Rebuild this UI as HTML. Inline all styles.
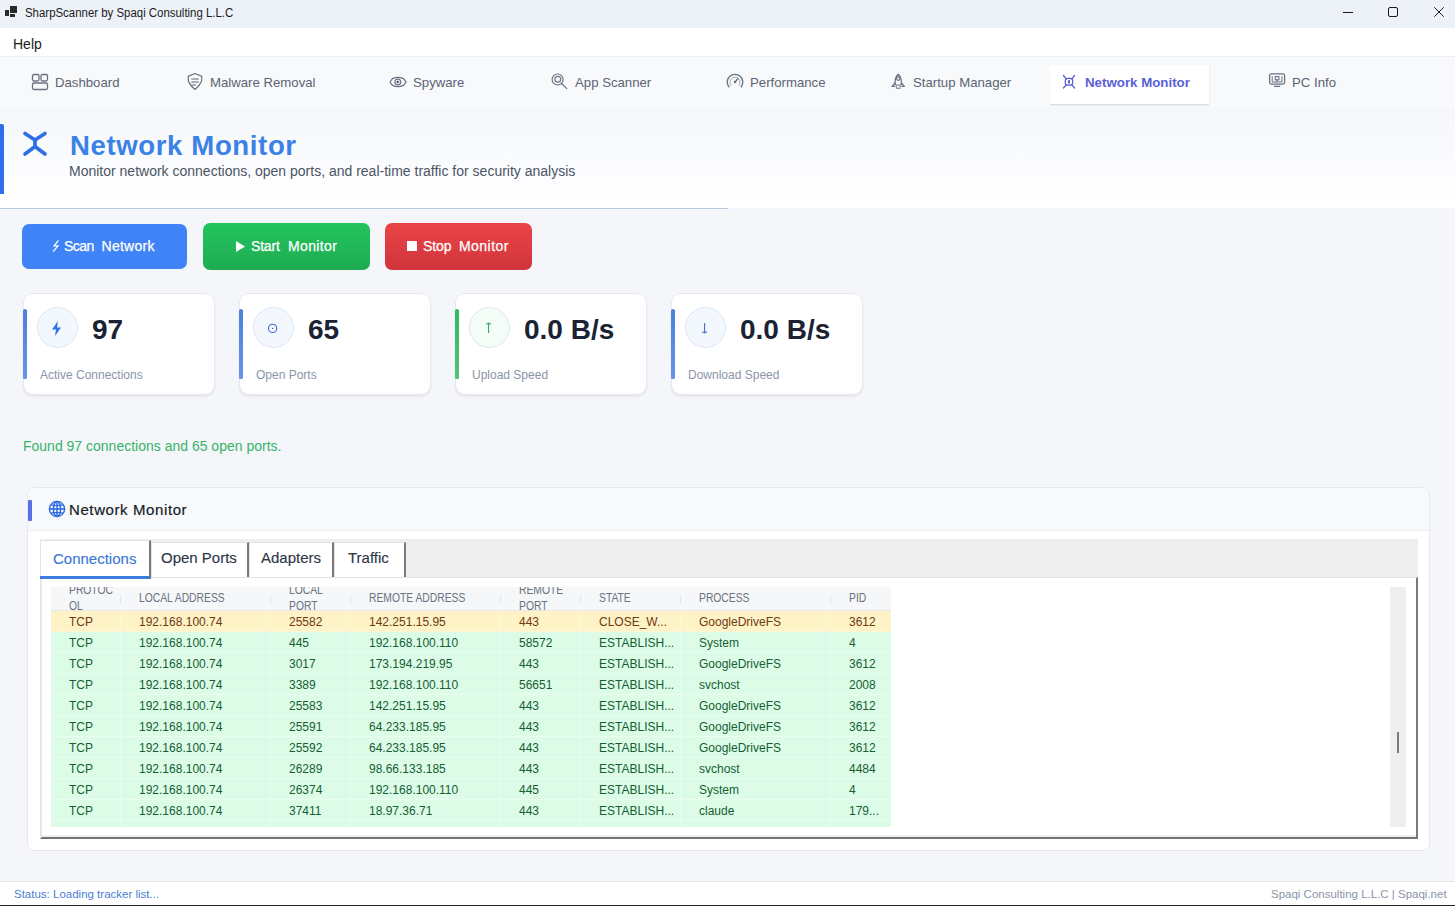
<!DOCTYPE html>
<html><head><meta charset="utf-8">
<style>
*{margin:0;padding:0;box-sizing:border-box}
html,body{width:1455px;height:906px;overflow:hidden}
body{position:relative;background:#f4f6fa;font-family:"Liberation Sans",sans-serif;color:#1f2937}
.a{position:absolute;white-space:nowrap}
#titlebar{left:0;top:0;width:1455px;height:28px;background:#edf1f8}
#menubar{left:0;top:28px;width:1455px;height:29px;background:#fff}
#navbar{left:0;top:56px;width:1455px;height:52px;background:#f8f9fb;border-top:1px solid #edeff3}
.nav{font-size:13.2px;color:#5b6474;line-height:16px;margin-top:1px}
#header{left:0;top:108px;width:1455px;height:100px;background:linear-gradient(180deg,#f5f7fa 0%,#fafbfd 50%,#ffffff 100%)}
.btn{border-radius:7px}
.bt{color:#fff;font-size:14px;line-height:16px;-webkit-text-stroke:0.25px #fff}
.card{width:192px;height:102px;background:#fff;border:1px solid #e6e9ef;border-radius:10px;box-shadow:0 2px 2px rgba(0,0,0,0.06)}
.bar{width:4px;border-radius:2px 2px 1px 1px}
.circ{width:41px;height:41px;border-radius:50%;background:#f3f7fe;border:1px solid #dfe7f4}
.val{font-size:28px;font-weight:bold;color:#1a2234;line-height:32px;margin-top:1px}
.lbl{font-size:12px;color:#8b95a7;line-height:14px;margin-top:1px}
.th{font-size:12px;color:#6b7280;line-height:15px;transform:scaleX(0.86);transform-origin:0 0}
.row{left:51px;width:840px;height:21px}
.cell{font-size:12px;line-height:21px;position:absolute;top:1px;white-space:nowrap}
</style></head><body>

<!-- title bar -->
<div class="a" id="titlebar"></div>
<div class="a" style="left:0;top:0;width:1455px;height:28px">
  <svg class="a" style="left:4px;top:5px" width="16" height="16" viewBox="0 0 16 16"><rect x="1" y="5" width="4" height="6" fill="#2b2b2b"/><rect x="6" y="1" width="7" height="7" fill="#2b2b2b"/><rect x="6" y="9" width="5" height="3" fill="#2b2b2b"/></svg>
  <div class="a" style="left:25px;top:4.6px;font-size:12px;line-height:16px;color:#1b1b1b;transform:scaleX(0.952);transform-origin:0 0">SharpScanner by Spaqi Consulting L.L.C</div>
  <div class="a" style="left:1343px;top:12px;width:10px;height:1px;background:#1b1b1b"></div>
  <div class="a" style="left:1388px;top:7px;width:10px;height:10px;border:1px solid #1b1b1b;border-radius:2px"></div>
  <svg class="a" style="left:1434px;top:7px" width="10" height="10" viewBox="0 0 10 10"><path d="M0.3 0.3L9.7 9.7M9.7 0.3L0.3 9.7" stroke="#1b1b1b" stroke-width="1"/></svg>
</div>

<!-- menu bar -->
<div class="a" id="menubar"></div>
<div class="a" style="left:13px;top:36px;font-size:14px;line-height:16px;color:#1b1b1b">Help</div>

<!-- nav bar -->
<div class="a" id="navbar"></div>
<div class="a" style="left:1050px;top:65px;width:159px;height:39px;background:#fff;box-shadow:0 1.5px 0 #dcdfe5, 1px 0 1px #eef0f3"></div>

<svg class="a" style="left:31px;top:73px" width="18" height="18" viewBox="0 0 18 18" fill="none" stroke="#6b7280" stroke-width="1.3"><rect x="1.5" y="1.5" width="6.5" height="6.5" rx="1.5"/><rect x="10" y="1.5" width="6.5" height="6.5" rx="1.5"/><rect x="1.5" y="10" width="15" height="6.5" rx="1.5"/></svg>
<div class="a nav" style="left:55px;top:74px">Dashboard</div>

<svg class="a" style="left:182px;top:70px" width="24" height="24" viewBox="0 0 24 24" fill="none" stroke="#6b7280" stroke-width="1.2" stroke-linejoin="round"><path d="M13 3.5L19.8 6.4L19.6 11Q18 15.5 13 19.5Q8 15.5 6.4 11L6.2 6.4Z"/><path d="M9.3 9H16.7M9.3 12H16.7M9.3 15H14" stroke="#8f96a3" stroke-width="1.5"/></svg>
<div class="a nav" style="left:210px;top:74px">Malware Removal</div>

<svg class="a" style="left:384px;top:70px" width="28" height="24" viewBox="0 0 28 24" fill="none" stroke="#6b7280" stroke-width="1.2"><path d="M6 12L8.5 8.6Q14 6 19.5 8.6L22 12L19.5 15.4Q14 18 8.5 15.4Z"/><circle cx="13.8" cy="12" r="2.9"/><circle cx="13.8" cy="12" r="1.2" fill="#4b5260" stroke="none"/></svg>
<div class="a nav" style="left:413px;top:74px">Spyware</div>

<svg class="a" style="left:546px;top:70px" width="24" height="24" viewBox="0 0 24 24" fill="none" stroke="#6b7280" stroke-width="1.2"><circle cx="11.6" cy="9.5" r="5.5"/><circle cx="11.8" cy="9.3" r="2.9"/><path d="M15.6 13.5L20.8 18.7" stroke-linecap="round"/></svg>
<div class="a nav" style="left:575px;top:74px">App Scanner</div>

<svg class="a" style="left:722px;top:70px" width="24" height="24" viewBox="0 0 24 24" fill="none" stroke="#6b7280" stroke-width="1.3"><path d="M7.2 17.3A7.8 7.8 0 1 1 18.8 17.3"/><path d="M9.3 15.5A5 5 0 1 1 16.7 15.5" stroke-width="0.9" stroke="#9aa1ad"/><path d="M13 12L16.3 8.2"/><circle cx="13" cy="12" r="1.3" fill="#6b7280" stroke="none"/></svg>
<div class="a nav" style="left:750px;top:74px">Performance</div>

<svg class="a" style="left:886px;top:70px" width="24" height="24" viewBox="0 0 24 24" fill="none" stroke="#6b7280" stroke-width="1.2" stroke-linejoin="round"><path d="M12.2 4.2Q15.3 7 15.3 11.5V15H9.1V11.5Q9.1 7 12.2 4.2Z"/><circle cx="12.2" cy="8.6" r="1.7"/><path d="M9.3 12.5L6 16.5H9.1M15.1 12.5L18.4 16.5H15.3"/><path d="M10.4 15.2V18.4H14V15.2" stroke="#8f96a3"/></svg>
<div class="a nav" style="left:913px;top:74px">Startup Manager</div>

<svg class="a" style="left:1061px;top:73px" width="16" height="17" viewBox="0 0 16 17" fill="none" stroke="#5757d4" stroke-width="1.2"><rect x="4.3" y="5.4" width="7.4" height="6.8" rx="2.4"/><ellipse cx="8" cy="8.8" rx="1.1" ry="2" fill="#5757d4" stroke="none"/><path d="M2.4 2.5L5.2 5.8M13.6 2.5L10.8 5.8M2.4 15L5.2 11.8M13.6 15L10.8 11.8" stroke-linecap="round"/></svg>
<div class="a nav" style="left:1085px;top:74px;font-weight:bold;color:#5b5fd6;font-size:13.3px">Network Monitor</div>

<svg class="a" style="left:1268px;top:72px" width="18" height="16" viewBox="0 0 18 16" fill="none" stroke="#6b7280" stroke-width="1.3"><rect x="1.6" y="1.9" width="15" height="10.2" rx="1.5"/><path d="M4.2 4.2V10H14V4.2" stroke-width="1"/><rect x="7.3" y="4.6" width="3.6" height="3.2" stroke-width="1.1"/><path d="M9.1 7.8V10M6 14.3H12.2" stroke-width="1.2"/></svg>
<div class="a nav" style="left:1292px;top:74px">PC Info</div>

<!-- header -->
<div class="a" id="header"></div>
<div class="a" style="left:0;top:124px;width:4px;height:70px;background:#2f6fec;border-radius:0 2px 0 0"></div>
<svg class="a" style="left:20px;top:128.7px" width="30" height="30" viewBox="0 0 30 30" fill="none" stroke="#2f6fe6" stroke-width="3.7" stroke-linecap="round" stroke-linejoin="round"><path d="M5 4.5L15 11L25 4.5M15 11V17.5M5 25L15 17.5L25 25"/></svg>
<div class="a" style="left:70px;top:129px;font-size:27.6px;line-height:34px;font-weight:bold;color:#3b82e6;letter-spacing:0.6px">Network Monitor</div>
<div class="a" style="left:69px;top:163px;font-size:14px;line-height:16px;color:#4b5563">Monitor network connections, open ports, and real-time traffic for security analysis</div>
<div class="a" style="left:0;top:208px;width:728px;height:1px;background:#b9cae3"></div>

<!-- buttons -->
<div class="a btn" style="left:22px;top:224px;width:165px;height:45px;background:#3f83f6"></div>
<svg class="a" style="left:52px;top:240px" width="8" height="12" viewBox="0 0 8 12" fill="none" stroke="#fff" stroke-width="1.2" stroke-linejoin="miter"><path d="M6.5 0.5L2 5.8H6L1.2 11.5"/></svg>
<div class="a bt" style="left:64px;top:238px;letter-spacing:-0.5px">Scan</div>
<div class="a bt" style="left:101.5px;top:238px;letter-spacing:0.27px">Network</div>
<div class="a btn" style="left:203px;top:223px;width:167px;height:47px;background:linear-gradient(#23c45e,#1eab52)"></div>
<svg class="a" style="left:236px;top:241px" width="9" height="11" viewBox="0 0 9 11"><path d="M0 0L9 5.5L0 11z" fill="#fff"/></svg>
<div class="a bt" style="left:251px;top:238px;letter-spacing:-0.2px">Start</div>
<div class="a bt" style="left:288px;top:238px;letter-spacing:0.37px">Monitor</div>
<div class="a btn" style="left:385px;top:223px;width:147px;height:47px;background:linear-gradient(#eb4447,#d0343c)"></div>
<div class="a" style="left:407px;top:241px;width:10px;height:10px;background:#fff"></div>
<div class="a bt" style="left:423px;top:238px;letter-spacing:-0.1px">Stop</div>
<div class="a bt" style="left:459px;top:238px;letter-spacing:0.45px">Monitor</div>

<!-- cards -->
<div class="a card" style="left:23px;top:293px"></div>
<div class="a bar" style="left:23px;top:309px;height:70px;background:linear-gradient(#4a80e0,#6495e8)"></div>
<div class="a circ" style="left:37px;top:307px"></div>
<svg class="a" style="left:51px;top:321px" width="12" height="15" viewBox="0 0 12 15"><path d="M7 0L1 8.5h4L4 15l6-8.5H6z" fill="#2f72e6"/></svg>
<div class="a val" style="left:92px;top:313px">97</div>
<div class="a lbl" style="left:40px;top:367px">Active Connections</div>

<div class="a card" style="left:239px;top:293px"></div>
<div class="a bar" style="left:239px;top:309px;height:70px;background:linear-gradient(#4a80e0,#6495e8)"></div>
<div class="a circ" style="left:253px;top:307px"></div>
<svg class="a" style="left:266px;top:322px" width="13" height="13" viewBox="0 0 13 13" fill="none" stroke="#3a6ed3" stroke-width="1.1"><circle cx="6.6" cy="6.4" r="4.1"/><circle cx="6.6" cy="6.4" r="0.6" fill="#3a4f80" stroke="none"/></svg>
<div class="a val" style="left:308px;top:313px">65</div>
<div class="a lbl" style="left:256px;top:367px">Open Ports</div>

<div class="a card" style="left:455px;top:293px"></div>
<div class="a bar" style="left:455px;top:309px;height:70px;background:linear-gradient(#2dba5e,#52c37c)"></div>
<div class="a circ" style="left:469px;top:307px;background:#f3fcf6;border-color:#dfeae3"></div>
<svg class="a" style="left:484px;top:322px" width="9" height="12" viewBox="0 0 9 12" fill="none" stroke="#38a56d" stroke-width="1.1"><path d="M4.6 1.3V11"/><path d="M2.3 2.2L4.6 1.2L6.9 2.2"/></svg>
<div class="a val" style="left:524px;top:313px">0.0 B/s</div>
<div class="a lbl" style="left:472px;top:367px">Upload Speed</div>

<div class="a card" style="left:671px;top:293px"></div>
<div class="a bar" style="left:671px;top:309px;height:70px;background:linear-gradient(#4a80e0,#6495e8)"></div>
<div class="a circ" style="left:685px;top:307px"></div>
<svg class="a" style="left:700px;top:322px" width="9" height="12" viewBox="0 0 9 12" fill="none" stroke="#4a70c8" stroke-width="1.1"><path d="M4.6 1V10.7"/><path d="M2.3 9.8L4.6 10.8L6.9 9.8"/></svg>
<div class="a val" style="left:740px;top:313px">0.0 B/s</div>
<div class="a lbl" style="left:688px;top:367px">Download Speed</div>

<div class="a" style="left:23px;top:438px;font-size:14px;line-height:16px;color:#38b368">Found 97 connections and 65 open ports.</div>

<!-- panel -->
<div class="a" style="left:27px;top:487px;width:1403px;height:364px;background:#fff;border:1px solid #e5e8ee;border-radius:7px;overflow:hidden">
  <div class="a" style="left:0;top:0;width:1403px;height:43px;background:#f8f9fb;border-bottom:1px solid #eceff3"></div>
</div>
<div class="a" style="left:28px;top:500px;width:4px;height:21px;background:#5a6fe6;border-radius:1px"></div>
<svg class="a" style="left:48px;top:500px" width="18" height="18" viewBox="0 0 18 18" fill="none" stroke="#2a67e0" stroke-width="1.4"><circle cx="9" cy="9" r="7.6"/><ellipse cx="9" cy="9" rx="3.6" ry="7.6"/><path d="M1.4 9H16.6M9 1.4V16.6M3 4.9Q9 6.4 15 4.9M3 13.1Q9 11.6 15 13.1"/></svg>
<div class="a" style="left:69px;top:501px;font-size:15px;line-height:17px;color:#151b26;letter-spacing:0.6px;-webkit-text-stroke:0.2px #151b26">Network Monitor</div>

<!-- tab control -->
<div class="a" style="left:40px;top:539px;width:1378px;height:38px;background:#efefef"></div>
<div class="a" style="left:40px;top:577px;width:1378px;height:262px;background:#fff;border-top:1px solid #e3e3e3;border-left:2px solid #e6e6e6;box-shadow:inset 0 -2px 0 #efefef;border-right:2px solid #7a7a7a;border-bottom:2px solid #747474"></div>

<div class="a" style="left:40px;top:540px;width:111px;height:39px;background:#fff;border-top:1px solid #e3e3e3;border-left:1px solid #e3e3e3;border-right:2px solid #7a7a7a"></div>
<div class="a" style="left:40px;top:576px;width:110px;height:3px;background:#3b7ddd"></div>
<div class="a" style="left:53px;top:550px;font-size:15px;line-height:17px;color:#3b78d6;-webkit-text-stroke:0.15px #3b78d6">Connections</div>

<div class="a" style="left:151px;top:542px;width:98px;height:35px;background:#fff;border-top:1px solid #e3e3e3;border-left:1px solid #e3e3e3;border-right:2px solid #7a7a7a"></div>
<div class="a" style="left:161px;top:549px;font-size:15px;line-height:17px;color:#2d3748;-webkit-text-stroke:0.15px #2d3748">Open Ports</div>
<div class="a" style="left:249px;top:542px;width:85px;height:35px;background:#fff;border-top:1px solid #e3e3e3;border-left:1px solid #e3e3e3;border-right:2px solid #7a7a7a"></div>
<div class="a" style="left:261px;top:549px;font-size:15px;line-height:17px;color:#2d3748;-webkit-text-stroke:0.15px #2d3748">Adapters</div>
<div class="a" style="left:334px;top:542px;width:72px;height:35px;background:#fff;border-top:1px solid #e3e3e3;border-left:1px solid #e3e3e3;border-right:2px solid #7a7a7a"></div>
<div class="a" style="left:348px;top:549px;font-size:15px;line-height:17px;color:#2d3748;-webkit-text-stroke:0.15px #2d3748">Traffic</div>

<!-- table -->
<div class="a" style="left:51px;top:587px;width:1339px;height:240px;overflow:hidden">
<div class="a" style="left:0;top:0;width:840px;height:24px;background:#f6f7f9;border-bottom:1px solid #e6e8ec;overflow:hidden">
<div class="a th" style="left:18px;top:-5px;line-height:16px">PROTOC<br>OL</div>
<div class="a th" style="left:88px;top:4px">LOCAL ADDRESS</div>
<div class="a th" style="left:238px;top:-5px;line-height:16px">LOCAL<br>PORT</div>
<div class="a th" style="left:318px;top:4px">REMOTE ADDRESS</div>
<div class="a th" style="left:468px;top:-5px;line-height:16px">REMOTE<br>PORT</div>
<div class="a th" style="left:548px;top:4px">STATE</div>
<div class="a th" style="left:648px;top:4px">PROCESS</div>
<div class="a th" style="left:798px;top:4px">PID</div>
<div class="a" style="left:69px;top:8px;width:1px;height:9px;background:#e3e6ea"></div>
<div class="a" style="left:219px;top:8px;width:1px;height:9px;background:#e3e6ea"></div>
<div class="a" style="left:299px;top:8px;width:1px;height:9px;background:#e3e6ea"></div>
<div class="a" style="left:449px;top:8px;width:1px;height:9px;background:#e3e6ea"></div>
<div class="a" style="left:529px;top:8px;width:1px;height:9px;background:#e3e6ea"></div>
<div class="a" style="left:629px;top:8px;width:1px;height:9px;background:#e3e6ea"></div>
<div class="a" style="left:779px;top:8px;width:1px;height:9px;background:#e3e6ea"></div>
</div>
<div class="a" style="left:0;top:23.5px;width:840px;height:21px;background:#fef3c7;border-bottom:1px solid #fef6d6">
<div class="cell" style="left:18px;color:#70380f">TCP</div>
<div class="cell" style="left:88px;color:#70380f">192.168.100.74</div>
<div class="cell" style="left:238px;color:#70380f">25582</div>
<div class="cell" style="left:318px;color:#70380f">142.251.15.95</div>
<div class="cell" style="left:468px;color:#70380f">443</div>
<div class="cell" style="left:548px;color:#70380f">CLOSE_W...</div>
<div class="cell" style="left:648px;color:#70380f">GoogleDriveFS</div>
<div class="cell" style="left:798px;color:#70380f">3612</div>
<div class="a" style="left:69px;top:0;width:1px;height:21px;background:#fef6d6"></div>
<div class="a" style="left:219px;top:0;width:1px;height:21px;background:#fef6d6"></div>
<div class="a" style="left:299px;top:0;width:1px;height:21px;background:#fef6d6"></div>
<div class="a" style="left:449px;top:0;width:1px;height:21px;background:#fef6d6"></div>
<div class="a" style="left:529px;top:0;width:1px;height:21px;background:#fef6d6"></div>
<div class="a" style="left:629px;top:0;width:1px;height:21px;background:#fef6d6"></div>
<div class="a" style="left:779px;top:0;width:1px;height:21px;background:#fef6d6"></div>
</div>
<div class="a" style="left:0;top:44.5px;width:840px;height:21px;background:#dcfce7;border-bottom:1px solid #e9fdf0">
<div class="cell" style="left:18px;color:#155e33">TCP</div>
<div class="cell" style="left:88px;color:#155e33">192.168.100.74</div>
<div class="cell" style="left:238px;color:#155e33">445</div>
<div class="cell" style="left:318px;color:#155e33">192.168.100.110</div>
<div class="cell" style="left:468px;color:#155e33">58572</div>
<div class="cell" style="left:548px;color:#155e33">ESTABLISH...</div>
<div class="cell" style="left:648px;color:#155e33">System</div>
<div class="cell" style="left:798px;color:#155e33">4</div>
<div class="a" style="left:69px;top:0;width:1px;height:21px;background:#e9fdf0"></div>
<div class="a" style="left:219px;top:0;width:1px;height:21px;background:#e9fdf0"></div>
<div class="a" style="left:299px;top:0;width:1px;height:21px;background:#e9fdf0"></div>
<div class="a" style="left:449px;top:0;width:1px;height:21px;background:#e9fdf0"></div>
<div class="a" style="left:529px;top:0;width:1px;height:21px;background:#e9fdf0"></div>
<div class="a" style="left:629px;top:0;width:1px;height:21px;background:#e9fdf0"></div>
<div class="a" style="left:779px;top:0;width:1px;height:21px;background:#e9fdf0"></div>
</div>
<div class="a" style="left:0;top:65.5px;width:840px;height:21px;background:#dcfce7;border-bottom:1px solid #e9fdf0">
<div class="cell" style="left:18px;color:#155e33">TCP</div>
<div class="cell" style="left:88px;color:#155e33">192.168.100.74</div>
<div class="cell" style="left:238px;color:#155e33">3017</div>
<div class="cell" style="left:318px;color:#155e33">173.194.219.95</div>
<div class="cell" style="left:468px;color:#155e33">443</div>
<div class="cell" style="left:548px;color:#155e33">ESTABLISH...</div>
<div class="cell" style="left:648px;color:#155e33">GoogleDriveFS</div>
<div class="cell" style="left:798px;color:#155e33">3612</div>
<div class="a" style="left:69px;top:0;width:1px;height:21px;background:#e9fdf0"></div>
<div class="a" style="left:219px;top:0;width:1px;height:21px;background:#e9fdf0"></div>
<div class="a" style="left:299px;top:0;width:1px;height:21px;background:#e9fdf0"></div>
<div class="a" style="left:449px;top:0;width:1px;height:21px;background:#e9fdf0"></div>
<div class="a" style="left:529px;top:0;width:1px;height:21px;background:#e9fdf0"></div>
<div class="a" style="left:629px;top:0;width:1px;height:21px;background:#e9fdf0"></div>
<div class="a" style="left:779px;top:0;width:1px;height:21px;background:#e9fdf0"></div>
</div>
<div class="a" style="left:0;top:86.5px;width:840px;height:21px;background:#dcfce7;border-bottom:1px solid #e9fdf0">
<div class="cell" style="left:18px;color:#155e33">TCP</div>
<div class="cell" style="left:88px;color:#155e33">192.168.100.74</div>
<div class="cell" style="left:238px;color:#155e33">3389</div>
<div class="cell" style="left:318px;color:#155e33">192.168.100.110</div>
<div class="cell" style="left:468px;color:#155e33">56651</div>
<div class="cell" style="left:548px;color:#155e33">ESTABLISH...</div>
<div class="cell" style="left:648px;color:#155e33">svchost</div>
<div class="cell" style="left:798px;color:#155e33">2008</div>
<div class="a" style="left:69px;top:0;width:1px;height:21px;background:#e9fdf0"></div>
<div class="a" style="left:219px;top:0;width:1px;height:21px;background:#e9fdf0"></div>
<div class="a" style="left:299px;top:0;width:1px;height:21px;background:#e9fdf0"></div>
<div class="a" style="left:449px;top:0;width:1px;height:21px;background:#e9fdf0"></div>
<div class="a" style="left:529px;top:0;width:1px;height:21px;background:#e9fdf0"></div>
<div class="a" style="left:629px;top:0;width:1px;height:21px;background:#e9fdf0"></div>
<div class="a" style="left:779px;top:0;width:1px;height:21px;background:#e9fdf0"></div>
</div>
<div class="a" style="left:0;top:107.5px;width:840px;height:21px;background:#dcfce7;border-bottom:1px solid #e9fdf0">
<div class="cell" style="left:18px;color:#155e33">TCP</div>
<div class="cell" style="left:88px;color:#155e33">192.168.100.74</div>
<div class="cell" style="left:238px;color:#155e33">25583</div>
<div class="cell" style="left:318px;color:#155e33">142.251.15.95</div>
<div class="cell" style="left:468px;color:#155e33">443</div>
<div class="cell" style="left:548px;color:#155e33">ESTABLISH...</div>
<div class="cell" style="left:648px;color:#155e33">GoogleDriveFS</div>
<div class="cell" style="left:798px;color:#155e33">3612</div>
<div class="a" style="left:69px;top:0;width:1px;height:21px;background:#e9fdf0"></div>
<div class="a" style="left:219px;top:0;width:1px;height:21px;background:#e9fdf0"></div>
<div class="a" style="left:299px;top:0;width:1px;height:21px;background:#e9fdf0"></div>
<div class="a" style="left:449px;top:0;width:1px;height:21px;background:#e9fdf0"></div>
<div class="a" style="left:529px;top:0;width:1px;height:21px;background:#e9fdf0"></div>
<div class="a" style="left:629px;top:0;width:1px;height:21px;background:#e9fdf0"></div>
<div class="a" style="left:779px;top:0;width:1px;height:21px;background:#e9fdf0"></div>
</div>
<div class="a" style="left:0;top:128.5px;width:840px;height:21px;background:#dcfce7;border-bottom:1px solid #e9fdf0">
<div class="cell" style="left:18px;color:#155e33">TCP</div>
<div class="cell" style="left:88px;color:#155e33">192.168.100.74</div>
<div class="cell" style="left:238px;color:#155e33">25591</div>
<div class="cell" style="left:318px;color:#155e33">64.233.185.95</div>
<div class="cell" style="left:468px;color:#155e33">443</div>
<div class="cell" style="left:548px;color:#155e33">ESTABLISH...</div>
<div class="cell" style="left:648px;color:#155e33">GoogleDriveFS</div>
<div class="cell" style="left:798px;color:#155e33">3612</div>
<div class="a" style="left:69px;top:0;width:1px;height:21px;background:#e9fdf0"></div>
<div class="a" style="left:219px;top:0;width:1px;height:21px;background:#e9fdf0"></div>
<div class="a" style="left:299px;top:0;width:1px;height:21px;background:#e9fdf0"></div>
<div class="a" style="left:449px;top:0;width:1px;height:21px;background:#e9fdf0"></div>
<div class="a" style="left:529px;top:0;width:1px;height:21px;background:#e9fdf0"></div>
<div class="a" style="left:629px;top:0;width:1px;height:21px;background:#e9fdf0"></div>
<div class="a" style="left:779px;top:0;width:1px;height:21px;background:#e9fdf0"></div>
</div>
<div class="a" style="left:0;top:149.5px;width:840px;height:21px;background:#dcfce7;border-bottom:1px solid #e9fdf0">
<div class="cell" style="left:18px;color:#155e33">TCP</div>
<div class="cell" style="left:88px;color:#155e33">192.168.100.74</div>
<div class="cell" style="left:238px;color:#155e33">25592</div>
<div class="cell" style="left:318px;color:#155e33">64.233.185.95</div>
<div class="cell" style="left:468px;color:#155e33">443</div>
<div class="cell" style="left:548px;color:#155e33">ESTABLISH...</div>
<div class="cell" style="left:648px;color:#155e33">GoogleDriveFS</div>
<div class="cell" style="left:798px;color:#155e33">3612</div>
<div class="a" style="left:69px;top:0;width:1px;height:21px;background:#e9fdf0"></div>
<div class="a" style="left:219px;top:0;width:1px;height:21px;background:#e9fdf0"></div>
<div class="a" style="left:299px;top:0;width:1px;height:21px;background:#e9fdf0"></div>
<div class="a" style="left:449px;top:0;width:1px;height:21px;background:#e9fdf0"></div>
<div class="a" style="left:529px;top:0;width:1px;height:21px;background:#e9fdf0"></div>
<div class="a" style="left:629px;top:0;width:1px;height:21px;background:#e9fdf0"></div>
<div class="a" style="left:779px;top:0;width:1px;height:21px;background:#e9fdf0"></div>
</div>
<div class="a" style="left:0;top:170.5px;width:840px;height:21px;background:#dcfce7;border-bottom:1px solid #e9fdf0">
<div class="cell" style="left:18px;color:#155e33">TCP</div>
<div class="cell" style="left:88px;color:#155e33">192.168.100.74</div>
<div class="cell" style="left:238px;color:#155e33">26289</div>
<div class="cell" style="left:318px;color:#155e33">98.66.133.185</div>
<div class="cell" style="left:468px;color:#155e33">443</div>
<div class="cell" style="left:548px;color:#155e33">ESTABLISH...</div>
<div class="cell" style="left:648px;color:#155e33">svchost</div>
<div class="cell" style="left:798px;color:#155e33">4484</div>
<div class="a" style="left:69px;top:0;width:1px;height:21px;background:#e9fdf0"></div>
<div class="a" style="left:219px;top:0;width:1px;height:21px;background:#e9fdf0"></div>
<div class="a" style="left:299px;top:0;width:1px;height:21px;background:#e9fdf0"></div>
<div class="a" style="left:449px;top:0;width:1px;height:21px;background:#e9fdf0"></div>
<div class="a" style="left:529px;top:0;width:1px;height:21px;background:#e9fdf0"></div>
<div class="a" style="left:629px;top:0;width:1px;height:21px;background:#e9fdf0"></div>
<div class="a" style="left:779px;top:0;width:1px;height:21px;background:#e9fdf0"></div>
</div>
<div class="a" style="left:0;top:191.5px;width:840px;height:21px;background:#dcfce7;border-bottom:1px solid #e9fdf0">
<div class="cell" style="left:18px;color:#155e33">TCP</div>
<div class="cell" style="left:88px;color:#155e33">192.168.100.74</div>
<div class="cell" style="left:238px;color:#155e33">26374</div>
<div class="cell" style="left:318px;color:#155e33">192.168.100.110</div>
<div class="cell" style="left:468px;color:#155e33">445</div>
<div class="cell" style="left:548px;color:#155e33">ESTABLISH...</div>
<div class="cell" style="left:648px;color:#155e33">System</div>
<div class="cell" style="left:798px;color:#155e33">4</div>
<div class="a" style="left:69px;top:0;width:1px;height:21px;background:#e9fdf0"></div>
<div class="a" style="left:219px;top:0;width:1px;height:21px;background:#e9fdf0"></div>
<div class="a" style="left:299px;top:0;width:1px;height:21px;background:#e9fdf0"></div>
<div class="a" style="left:449px;top:0;width:1px;height:21px;background:#e9fdf0"></div>
<div class="a" style="left:529px;top:0;width:1px;height:21px;background:#e9fdf0"></div>
<div class="a" style="left:629px;top:0;width:1px;height:21px;background:#e9fdf0"></div>
<div class="a" style="left:779px;top:0;width:1px;height:21px;background:#e9fdf0"></div>
</div>
<div class="a" style="left:0;top:212.5px;width:840px;height:21px;background:#dcfce7;border-bottom:1px solid #e9fdf0">
<div class="cell" style="left:18px;color:#155e33">TCP</div>
<div class="cell" style="left:88px;color:#155e33">192.168.100.74</div>
<div class="cell" style="left:238px;color:#155e33">37411</div>
<div class="cell" style="left:318px;color:#155e33">18.97.36.71</div>
<div class="cell" style="left:468px;color:#155e33">443</div>
<div class="cell" style="left:548px;color:#155e33">ESTABLISH...</div>
<div class="cell" style="left:648px;color:#155e33">claude</div>
<div class="cell" style="left:798px;color:#155e33">179...</div>
<div class="a" style="left:69px;top:0;width:1px;height:21px;background:#e9fdf0"></div>
<div class="a" style="left:219px;top:0;width:1px;height:21px;background:#e9fdf0"></div>
<div class="a" style="left:299px;top:0;width:1px;height:21px;background:#e9fdf0"></div>
<div class="a" style="left:449px;top:0;width:1px;height:21px;background:#e9fdf0"></div>
<div class="a" style="left:529px;top:0;width:1px;height:21px;background:#e9fdf0"></div>
<div class="a" style="left:629px;top:0;width:1px;height:21px;background:#e9fdf0"></div>
<div class="a" style="left:779px;top:0;width:1px;height:21px;background:#e9fdf0"></div>
</div>
<div class="a" style="left:0;top:233.5px;width:840px;height:21px;background:#dcfce7;border-bottom:1px solid #e9fdf0">
<div class="cell" style="left:18px;color:#155e33"></div>
<div class="cell" style="left:88px;color:#155e33"></div>
<div class="cell" style="left:238px;color:#155e33"></div>
<div class="cell" style="left:318px;color:#155e33"></div>
<div class="cell" style="left:468px;color:#155e33"></div>
<div class="cell" style="left:548px;color:#155e33"></div>
<div class="cell" style="left:648px;color:#155e33">m</div>
<div class="cell" style="left:798px;color:#155e33"></div>
<div class="a" style="left:69px;top:0;width:1px;height:21px;background:#e9fdf0"></div>
<div class="a" style="left:219px;top:0;width:1px;height:21px;background:#e9fdf0"></div>
<div class="a" style="left:299px;top:0;width:1px;height:21px;background:#e9fdf0"></div>
<div class="a" style="left:449px;top:0;width:1px;height:21px;background:#e9fdf0"></div>
<div class="a" style="left:529px;top:0;width:1px;height:21px;background:#e9fdf0"></div>
<div class="a" style="left:629px;top:0;width:1px;height:21px;background:#e9fdf0"></div>
<div class="a" style="left:779px;top:0;width:1px;height:21px;background:#e9fdf0"></div>
</div>
</div>
<!-- scrollbar -->
<div class="a" style="left:1390px;top:587px;width:16px;height:240px;background:#efefef"></div>
<div class="a" style="left:1397px;top:732px;width:2px;height:21px;background:#7a7a7a"></div>

<!-- status bar -->
<div class="a" style="left:0;top:881px;width:1455px;height:25px;background:#fff;border-top:1px solid #e5e7eb"></div>
<div class="a" style="left:0;top:905px;width:1455px;height:1px;background:#222"></div>
<div class="a" style="left:14px;top:887px;font-size:11.5px;line-height:14px;color:#4a7fd4">Status: Loading tracker list...</div>
<div class="a" style="left:1271px;top:887px;font-size:11.5px;line-height:14px;color:#8a94a6">Spaqi Consulting L.L.C | Spaqi.net</div>
</body></html>
